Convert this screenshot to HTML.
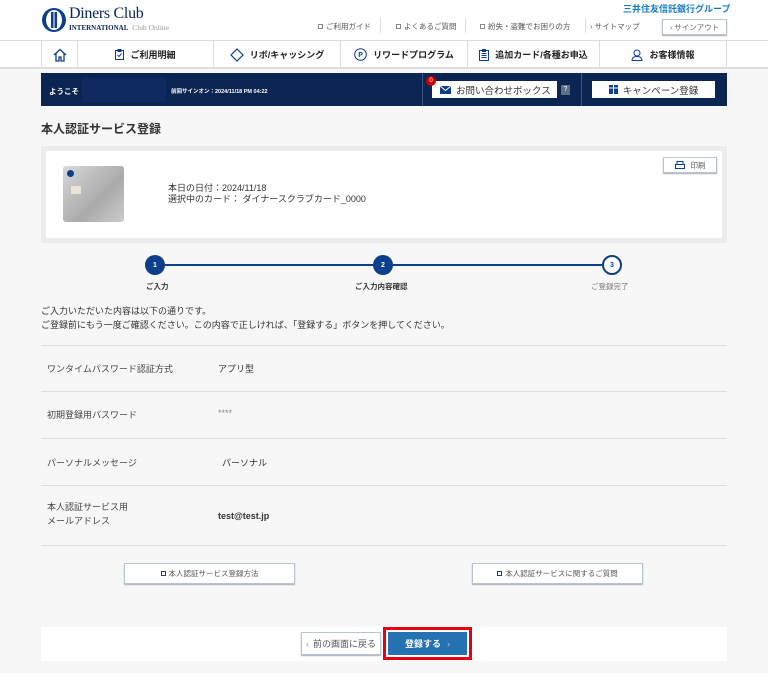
<!DOCTYPE html>
<html><head><meta charset="utf-8">
<style>
*{margin:0;padding:0;box-sizing:border-box}
body{width:768px;height:673px;background:#f7f7f7;font-family:"Liberation Sans","Noto Sans CJK JP",sans-serif;color:#333;position:relative;overflow:hidden;font-size:9px}
.abs{position:absolute}
#hdr{left:0;top:0;width:768px;height:40px;background:#fff}
#nav{left:0;top:40px;width:768px;height:29px;background:#fff;border-top:1px solid #ddd;border-bottom:2px solid #ddd}
.nv{position:absolute;top:0;height:27px;border-left:1px solid #ddd;display:flex;align-items:center;justify-content:center;font-size:9px;font-weight:bold;color:#222;gap:6px}
#bar{left:41px;top:73px;width:686px;height:33px;background:#0b2553}
.btn{position:absolute;background:#fff;border:1px solid #b9c4cf;box-shadow:0 1px 1px #aab;display:flex;align-items:center;justify-content:center;color:#444}
.row{position:absolute;left:41px;width:686px;border-top:1px solid #ddd}
.lab{position:absolute;left:47px;font-size:9px;color:#444}
.val{position:absolute;left:218px;font-size:9px;color:#333}
.circ{position:absolute;width:20px;height:20px;border-radius:50%;background:#0b3f8c;color:#fff;font-size:7px;font-weight:bold;display:flex;align-items:center;justify-content:center}
.sq{display:inline-block;width:5px;height:5px;border:1px solid #888;margin-right:3px;vertical-align:0}
.hl{position:absolute;top:21px;font-size:7.5px;color:#555;white-space:nowrap}
</style></head><body>
<div id="hdr" class="abs">
 <svg class="abs" style="left:41px;top:7px" width="26" height="26" viewBox="0 0 26 26"><circle cx="13" cy="13" r="12" fill="#0b3f8c"/><ellipse cx="13" cy="13" rx="8" ry="10" fill="#fff"/><rect x="10" y="5" width="2.5" height="16" fill="#0b3f8c"/><rect x="13.5" y="5" width="2.5" height="16" fill="#0b3f8c"/></svg>
 <div class="abs" style="left:69px;top:5px;font-family:'Liberation Serif',serif;font-size:16px;color:#0b2553;letter-spacing:-0.3px">Diners Club</div>
 <div class="abs" style="left:69px;top:23px;font-family:'Liberation Serif',serif;font-size:7px;font-weight:bold;color:#0b2553">INTERNATIONAL<span style="font-weight:normal;color:#999;font-size:7.5px">&nbsp; Club Online</span></div>
 <div class="abs" style="left:623px;top:2px;font-size:9px;font-weight:bold;color:#1a7bc0">三井住友信託銀行グループ</div>
 <div class="hl" style="left:318px"><span class="sq"></span>ご利用ガイド</div>
 <div class="abs" style="left:380px;top:18px;height:15px;border-left:1px solid #ddd"></div>
 <div class="hl" style="left:396px"><span class="sq"></span>よくあるご質問</div>
 <div class="abs" style="left:465px;top:18px;height:15px;border-left:1px solid #ddd"></div>
 <div class="hl" style="left:480px"><span class="sq"></span>紛失・盗難でお困りの方</div>
 <div class="abs" style="left:585px;top:18px;height:15px;border-left:1px solid #ddd"></div>
 <div class="hl" style="left:590px">› サイトマップ</div>
 <div class="btn" style="left:662px;top:19px;width:65px;height:16px;font-size:7.5px;color:#666">› サインアウト</div>
</div>
<div id="nav" class="abs">
 <div class="nv" style="left:41px;width:36px"><svg width="14" height="14" viewBox="0 0 14 14" fill="none" stroke="#0b3f8c" stroke-width="1.3"><path d="M1 7 7 1.5 13 7M3 5.5V13h3V9h2v4h3V5.5"/></svg></div>
 <div class="nv" style="left:77px;width:136px"><svg width="9" height="11" viewBox="0 0 9 11" fill="none" stroke="#0b3f8c"><rect x=".5" y="1.5" width="8" height="9"/><path d="M3 .5h3v2H3zM2.5 6l1.5 1.5 2.5-3"/></svg>ご利用明細</div>
 <div class="nv" style="left:213px;width:127px"><svg width="14" height="14" viewBox="0 0 14 14" fill="none" stroke="#0b3f8c" stroke-width="1.2"><path d="M7 1 13 7 7 13 1 7Z"/></svg>リボ/キャッシング</div>
 <div class="nv" style="left:340px;width:127px"><svg width="13" height="13" viewBox="0 0 13 13"><circle cx="6.5" cy="6.5" r="5.8" fill="none" stroke="#0b3f8c"/><text x="4.2" y="9.2" font-size="7" fill="#0b3f8c" font-family="Liberation Sans">P</text></svg>リワードプログラム</div>
 <div class="nv" style="left:467px;width:132px"><svg width="10" height="12" viewBox="0 0 10 12" fill="none" stroke="#0b3f8c"><rect x=".5" y="1.5" width="9" height="10"/><path d="M2.5 4.5h5M2.5 6.5h5M2.5 8.5h5M3.5.5h3v2h-3z"/></svg>追加カード/各種お申込</div>
 <div class="nv" style="left:599px;width:128px;border-right:1px solid #ddd"><svg width="12" height="12" viewBox="0 0 12 12" fill="none" stroke="#0b3f8c"><circle cx="6" cy="4" r="3"/><path d="M1 11.5h10c0-3-2.5-4-5-4s-5 1-5 4z"/></svg>お客様情報</div>
</div>
<div id="bar" class="abs">
 <div class="abs" style="left:8px;top:13px;color:#fff;font-size:7.5px;font-weight:bold">ようこそ</div>
 <div class="abs" style="left:41px;top:5px;width:84px;height:24px;background:#0e2a60"></div>
 <div class="abs" style="left:130px;top:14px;color:#fff;font-size:5.5px;font-weight:bold">前回サインオン：2024/11/18 PM 04:22</div>
 <div class="abs" style="left:381px;top:0;height:33px;border-left:1px solid #3b5585"></div>
 <div class="abs" style="left:540px;top:0;height:33px;border-left:1px solid #3b5585"></div>
 <div class="abs" style="left:391px;top:8px;width:125px;height:17px;background:#fff;font-size:9.5px;color:#333;display:flex;align-items:center;padding-left:8px;gap:5px;white-space:nowrap"><svg width="11" height="8"><rect width="11" height="8" fill="#0b3f8c"/><path d="M0 0 5.5 4.5 11 0" stroke="#fff" fill="none"/></svg>お問い合わせボックス</div>
 <div class="abs" style="left:385px;top:3px;width:10px;height:10px;border-radius:50%;background:#c00;color:#fff;font-size:6px;text-align:center;line-height:10px">0</div>
 <div class="abs" style="left:520px;top:12px;width:9px;height:10px;background:#5e7088;color:#fff;font-size:7px;text-align:center;line-height:10px">?</div>
 <div class="abs" style="left:551px;top:8px;width:123px;height:17px;background:#fff;font-size:9.5px;color:#333;display:flex;align-items:center;justify-content:center;gap:5px;white-space:nowrap"><svg width="9" height="9"><rect width="9" height="9" fill="#0b3f8c"/><path d="M4.5 0v9M0 3h9" stroke="#fff"/></svg>キャンペーン登録</div>
</div>
<div class="abs" style="left:41px;top:120px;font-size:12px;font-weight:bold;color:#333">本人認証サービス登録</div>
<div class="abs" style="left:41px;top:146px;width:686px;height:97px;background:#ececec"></div>
<div class="abs" style="left:46px;top:151px;width:676px;height:87px;background:#fff"></div>
<div class="abs" style="left:63px;top:166px;width:61px;height:56px;border-radius:3px;background:linear-gradient(135deg,#d8d8d8,#aaa 60%,#ccc)"><div style="position:absolute;left:4px;top:4px;width:7px;height:7px;border-radius:50%;background:#0b3f8c"></div><div style="position:absolute;left:8px;top:20px;width:10px;height:8px;background:#e8e4d8"></div></div>
<div class="abs" style="left:168px;top:183px;font-size:9px;color:#333;line-height:11px">本日の日付：2024/11/18<br>選択中のカード： ダイナースクラブカード_0000</div>
<div class="btn" style="left:663px;top:157px;width:54px;height:16px;font-size:7.5px;color:#555;gap:6px"><svg width="10" height="8" fill="none" stroke="#0b3f8c"><path d="M2 .5h6v3H2zM.5 3.5h9v4h-9z"/></svg>印刷</div>
<div class="abs" style="left:155px;top:264px;width:459px;height:2px;background:#0b3f8c"></div>
<div class="circ" style="left:145px;top:255px">1</div>
<div class="circ" style="left:373px;top:255px">2</div>
<div class="circ" style="left:602px;top:255px;background:#fff;border:2px solid #0b3f8c;color:#0b3f8c">3</div>
<div class="abs" style="left:146px;top:281px;font-size:7.5px;font-weight:bold">ご入力</div>
<div class="abs" style="left:355px;top:281px;font-size:7.5px;font-weight:bold">ご入力内容確認</div>
<div class="abs" style="left:591px;top:281px;font-size:7.5px;color:#777">ご登録完了</div>
<div class="abs" style="left:41px;top:304px;font-size:9px;line-height:14px;color:#333">ご入力いただいた内容は以下の通りです。<br>ご登録前にもう一度ご確認ください。この内容で正しければ、「登録する」ボタンを押してください。</div>
<div class="row" style="top:345px"></div>
<div class="row" style="top:391px"></div>
<div class="row" style="top:438px"></div>
<div class="row" style="top:485px"></div>
<div class="row" style="top:545px"></div>
<div class="lab" style="top:362px">ワンタイムパスワード認証方式</div><div class="val" style="top:362px">アプリ型</div>
<div class="lab" style="top:408px">初期登録用パスワード</div><div class="val" style="top:408px;color:#888">****</div>
<div class="lab" style="top:456px">パーソナルメッセージ</div><div class="val" style="top:456px;left:222px">パーソナル</div>
<div class="lab" style="top:500px;line-height:14px">本人認証サービス用<br>メールアドレス</div><div class="val" style="top:511px;font-weight:bold">test@test.jp</div>
<div class="btn" style="left:124px;top:563px;width:171px;height:21px;font-size:7.5px;color:#555"><span class="sq" style="border-color:#0b3f8c"></span>本人認証サービス登録方法</div>
<div class="btn" style="left:472px;top:563px;width:171px;height:21px;font-size:7.5px;color:#555"><span class="sq" style="border-color:#0b3f8c"></span>本人認証サービスに関するご質問</div>
<div class="abs" style="left:41px;top:627px;width:686px;height:34px;background:#fff"></div>
<div class="btn" style="left:301px;top:632px;width:80px;height:23px;font-size:9px;color:#555"><span style="color:#999;margin-right:4px">‹</span>前の画面に戻る</div>
<div class="abs" style="left:383px;top:627px;width:89px;height:33px;border:3px solid #e60012"></div>
<div class="abs" style="left:388px;top:632px;width:79px;height:23px;background:#2472b1;color:#fff;font-size:9px;font-weight:bold;display:flex;align-items:center;justify-content:center;gap:6px">登録する<span style="font-weight:normal;color:#bcd">›</span></div>
</body></html>
